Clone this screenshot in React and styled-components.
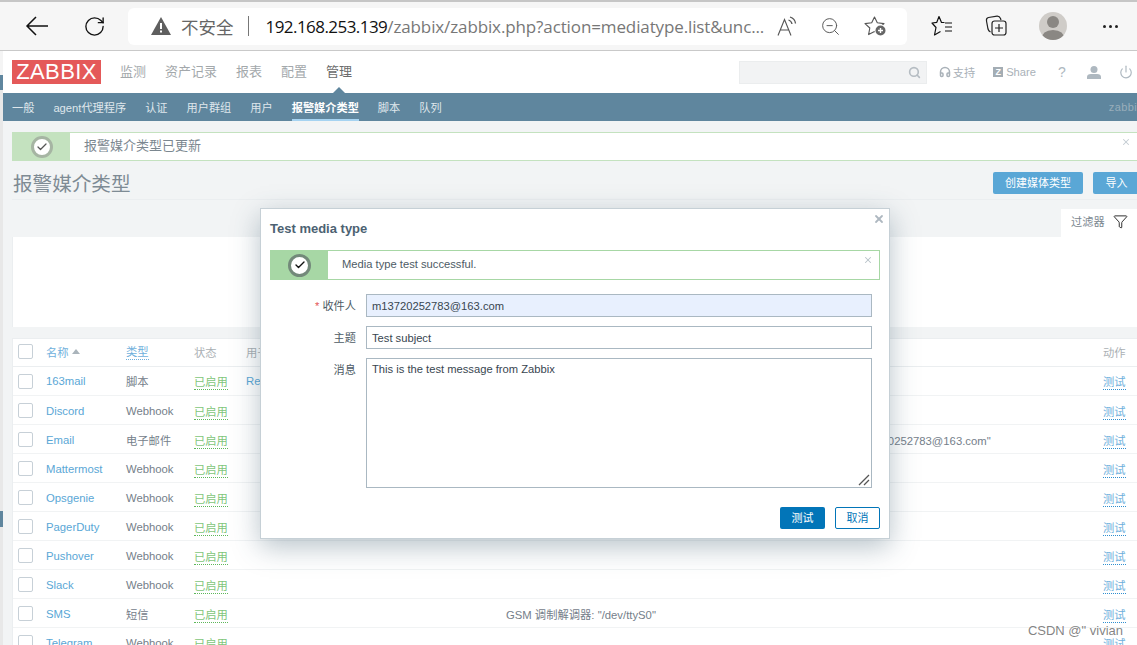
import React from 'react';
import styled, { createGlobalStyle } from 'styled-components';
import { RotateCw, ZoomOut, Search, Headphones, Power, Filter, Check, X } from 'lucide-react';

const rows = [
  { name: '163mail', type: '脚本', usedIn: 'Re' },
  { name: 'Discord', type: 'Webhook' },
  { name: 'Email', type: '电子邮件', detail: 'SMTP 服务器: "smtp.163.com.", SMTP HELO: "163.com", 电子邮件: "m13720252783@163.com"' },
  { name: 'Mattermost', type: 'Webhook' },
  { name: 'Opsgenie', type: 'Webhook' },
  { name: 'PagerDuty', type: 'Webhook' },
  { name: 'Pushover', type: 'Webhook' },
  { name: 'Slack', type: 'Webhook' },
  { name: 'SMS', type: '短信', detail: 'GSM 调制解调器: "/dev/ttyS0"' },
  { name: 'Telegram', type: 'Webhook' },
];

const menu = ['监测', '资产记录', '报表', '配置', '管理'];
const subMenu = ['一般', 'agent代理程序', '认证', '用户群组', '用户', '报警媒介类型', '脚本', '队列'];

export default function App() {
  return (
    <Page>
      <GlobalStyle />
      <BrowserBar>
        <NavIcon>
          <svg width="24" height="22" viewBox="0 0 24 22" fill="none" stroke="#111" strokeWidth="1.5">
            <path d="M2 11 H23 M11 2 L2 11 L11 20" />
          </svg>
        </NavIcon>
        <NavIcon><RotateCw size={23} strokeWidth={1.4} /></NavIcon>
        <AddressBar>
          <svg width="20" height="18" viewBox="0 0 20 18">
            <path d="M10 0 L20 18 H0 Z" fill="#5f5f5f" />
            <rect x="9" y="6" width="2" height="6" fill="#fff" />
            <rect x="9" y="13.5" width="2" height="2" fill="#fff" />
          </svg>
          <Insecure>不安全</Insecure>
          <AddressDivider />
          <Url><b>192.168.253.139</b>/zabbix/zabbix.php?action=mediatype.list&amp;unc...</Url>
          <AddressIcons>
            <svg width="20" height="21" viewBox="0 0 20 21" fill="none" stroke="#555" strokeWidth="1.1">
              <path d="M1 19.5 L7.5 3.5 L14 19.5 M3.4 14 H11.6" />
              <path d="M11.5 4 Q14.5 5 15 8 M13 1 Q18 2.5 18.5 7.5" strokeWidth="1.3" />
            </svg>
            <ZoomOut size={21} strokeWidth={1.1} color="#555" />
            <svg width="23" height="21" viewBox="0 0 23 21" fill="none">
              <path d="M10.5 1 L13.3 6.8 L20 7.6 L15.2 12 L16.4 18.6 L10.5 15.4 L4.6 18.6 L5.8 12 L1 7.6 L7.7 6.8 Z" stroke="#555" strokeWidth="1.1" strokeLinejoin="round" />
              <circle cx="16.5" cy="14.5" r="6" fill="#fff" />
              <circle cx="16.5" cy="14.5" r="5" fill="#666" />
              <path d="M14 14.5 H19 M16.5 12 V17" stroke="#fff" strokeWidth="1.4" />
            </svg>
          </AddressIcons>
        </AddressBar>
        <BrowserTools>
          <svg width="22" height="22" viewBox="0 0 22 22" fill="none" stroke="#111" strokeWidth="1.2" strokeLinejoin="round">
            <path d="M13.5 7.5 H10.5 L8 1.5 L5.8 7.3 L1 8 L5 12.5 L3.5 20 L9.5 16.5" />
            <path d="M14 8 H21 M14 12 H21 M14 16 H21" />
          </svg>
          <svg width="22" height="22" viewBox="0 0 22 22" fill="none" stroke="#222" strokeWidth="1.2">
            <path d="M5.5 17 Q3.5 16 3 14 L1.5 6 Q1 3 3.5 2.5 L12 1.2 Q14.5 1 15.5 3.5 L16 5" />
            <rect x="7" y="6" width="14" height="14" rx="2.5" />
            <path d="M14 9 V17 M10 13 H18" />
          </svg>
          <Avatar>
            <svg width="28" height="28" viewBox="0 0 28 28">
              <circle cx="14" cy="10" r="6" fill="#8a8783" />
              <path d="M2 28 Q3 18 14 18 Q25 18 26 28 Z" fill="#8a8783" />
            </svg>
          </Avatar>
          <Ellipsis><i /><i /><i /></Ellipsis>
        </BrowserTools>
      </BrowserBar>

      <Viewport>
        <Sliver />
        <Content>
          <Header>
            <Logo>ZABBIX</Logo>
            <MainMenu>
              {menu.map(item => (
                <MenuItem key={item} $active={item === '管理'}>{item}</MenuItem>
              ))}
            </MainMenu>
            <HeaderRight>
              <SearchBox><Search size={13} strokeWidth={3} color="#b5bcc2" /></SearchBox>
              <HeaderLink><Headphones size={12} strokeWidth={3} />支持</HeaderLink>
              <HeaderLink><ShareBadge>Z</ShareBadge>Share</HeaderLink>
              <HeaderIcon>?</HeaderIcon>
              <HeaderIcon>
                <svg width="14" height="13" viewBox="0 0 14 13" fill="#aeb8c0">
                  <circle cx="7" cy="3.5" r="3.5" />
                  <path d="M0 13 V11 Q0 8 4 8 H10 Q14 8 14 11 V13 Z" />
                </svg>
              </HeaderIcon>
              <HeaderIcon><Power size={14} strokeWidth={2} /></HeaderIcon>
            </HeaderRight>
          </Header>

          <SubNav>
            {subMenu.map(item => (
              <SubItem key={item} $active={item === '报警媒介类型'}>{item}</SubItem>
            ))}
            <ServerName>zabbix</ServerName>
          </SubNav>

          <Body>
            <PageMessage>
              <MessageBadge $width={57} $color="#c4e2bf">
                <CheckCircle $size={22} $ring="#a6b5a3"><Check size={12} strokeWidth={2.5} color="#555" /></CheckCircle>
              </MessageBadge>
              <MessageText>报警媒介类型已更新</MessageText>
              <CloseMark $top={4} $right={6}><X size={10} strokeWidth={2.5} color="#c4ccd2" /></CloseMark>
            </PageMessage>

            <TitleRow>
              <PageTitle>报警媒介类型</PageTitle>
              <TitleActions>
                <PrimaryButton $width={90}>创建媒体类型</PrimaryButton>
                <PrimaryButton $width={47}>导入</PrimaryButton>
              </TitleActions>
            </TitleRow>

            <FilterTabs>
              <FilterTab>过滤器<Filter size={15} strokeWidth={1.5} color="#222" /></FilterTab>
            </FilterTabs>
            <FilterPanel />

            <MediaTable>
              <HeadRow>
                <BoxCell><CheckBox /></BoxCell>
                <Cell><HeadLink>名称</HeadLink><SortArrow /></Cell>
                <Cell><HeadLink $underline>类型</HeadLink></Cell>
                <Cell>状态</Cell>
                <Cell>用于</Cell>
                <Cell />
                <Cell>动作</Cell>
              </HeadRow>
              {rows.map(row => (
                <Row key={row.name}>
                  <BoxCell><CheckBox /></BoxCell>
                  <Cell><NameLink>{row.name}</NameLink></Cell>
                  <Cell>{row.type}</Cell>
                  <Cell><StatusLink>已启用</StatusLink></Cell>
                  <Cell><NameLink>{row.usedIn}</NameLink></Cell>
                  <Cell>{row.detail}</Cell>
                  <Cell><TestLink>测试</TestLink></Cell>
                </Row>
              ))}
            </MediaTable>
          </Body>
        </Content>

        <Dialog>
          <CloseMark $top={4} $right={4}><X size={12} strokeWidth={3.6} color="#aeb8c0" /></CloseMark>
          <DialogTitle>Test media type</DialogTitle>
          <DialogMessage>
            <MessageBadge $width={57} $color="#a7d7a5">
              <CheckCircle $size={23} $ring="#73897a"><Check size={12} strokeWidth={2.8} color="#111" /></CheckCircle>
            </MessageBadge>
            <DialogMessageText>Media type test successful.</DialogMessageText>
            <CloseMark $top={4} $right={6}><X size={10} strokeWidth={2.5} color="#b8c2c9" /></CloseMark>
          </DialogMessage>
          <Form>
            <FieldLabel><Required>*</Required> 收件人</FieldLabel>
            <TextInput $filled>m13720252783@163.com</TextInput>
            <FieldLabel>主题</FieldLabel>
            <TextInput>Test subject</TextInput>
            <FieldLabel>消息</FieldLabel>
            <TextArea>
              This is the test message from Zabbix
              <ResizeGrip width="12" height="12" viewBox="0 0 12 12" stroke="#555" strokeWidth="1.3">
                <path d="M1 11 L11 1 M6 11 L11 6" />
              </ResizeGrip>
            </TextArea>
          </Form>
          <DialogFooter>
            <TestButton>测试</TestButton>
            <CancelButton>取消</CancelButton>
          </DialogFooter>
        </Dialog>

        <Watermark>CSDN @&quot; vivian</Watermark>
      </Viewport>
    </Page>
  );
}

const sans = `"Liberation Sans", Arial, "Noto Sans CJK SC", sans-serif`;

const GlobalStyle = createGlobalStyle`
  html, body {
    margin: 0;
    padding: 0;
    overflow: hidden;
    background: #f2f4f5;
    font-family: ${sans};
  }
`;

const Page = styled.div`
  width: 1137px;
  height: 645px;
  overflow: hidden;
  display: flex;
  flex-direction: column;
`;

const BrowserBar = styled.div`
  height: 51px;
  flex: none;
  box-sizing: border-box;
  display: flex;
  align-items: center;
  background: #f6f6f6;
  border-top: 2px solid #c6c6c6;
  border-bottom: 1px solid #c9c9c9;
  padding-left: 25px;
`;

const NavIcon = styled.div`
  width: 24px;
  height: 28px;
  margin-right: 33px;
  display: flex;
  align-items: center;
  justify-content: center;
  color: #111;
  &:nth-child(2) {
    margin-right: 22px;
  }
`;

const AddressBar = styled.div`
  width: 779px;
  height: 37px;
  box-sizing: border-box;
  background: #fff;
  border-radius: 6px;
  display: flex;
  align-items: center;
  padding-left: 23px;
  color: #6a6a6a;
`;

const Insecure = styled.span`
  margin-left: 10px;
  font: 17.5px "Noto Sans CJK SC", sans-serif;
  color: #666;
`;

const AddressDivider = styled.span`
  width: 1px;
  height: 20px;
  background: #777;
  margin: 0 17px 0 14px;
`;

const Url = styled.span`
  font: 17px "Open Sans", sans-serif;
  letter-spacing: -0.12px;
  color: #777;
  white-space: nowrap;
  b {
    font-weight: 400;
    color: #111;
    letter-spacing: -0.55px;
  }
`;

const AddressIcons = styled.div`
  margin-left: 13px;
  display: flex;
  align-items: center;
  gap: 23px;
`;

const BrowserTools = styled.div`
  display: flex;
  align-items: center;
  margin-left: 24px;
  gap: 32px;
`;

const Avatar = styled.div`
  width: 28px;
  height: 28px;
  border-radius: 50%;
  background: #cfccc8;
  overflow: hidden;
  svg {
    display: block;
  }
`;

const Ellipsis = styled.div`
  display: flex;
  gap: 3px;
  margin-left: 4px;
  i {
    width: 3px;
    height: 3px;
    border-radius: 50%;
    background: #222;
  }
`;

const Viewport = styled.div`
  position: relative;
  flex: 1;
  display: flex;
  min-height: 0;
`;

const Sliver = styled.div`
  width: 3px;
  flex: none;
  background: linear-gradient(#f4f4f4 0 24px, #5f869e 24px 39px, #e8e8e8 39px 460px, #5f869e 460px 476px, #e8e8e8 476px);
`;

const Content = styled.div`
  flex: 1;
  min-width: 0;
`;

const Header = styled.div`
  height: 42px;
  background: #fff;
  display: flex;
  align-items: center;
  padding-left: 9px;
`;

const Logo = styled.div`
  width: 89px;
  height: 24px;
  background: #e45959;
  color: #fff;
  font-size: 22px;
  letter-spacing: 0.4px;
  line-height: 24px;
  text-align: center;
`;

const MainMenu = styled.div`
  display: flex;
  height: 100%;
  align-items: center;
  gap: 19px;
  margin-left: 19px;
  padding-bottom: 3px;
  box-sizing: border-box;
`;

const MenuItem = styled.span`
  position: relative;
  font-size: 13px;
  color: ${p => (p.$active ? '#6b6b6b' : '#a3a8ab')};
  ${p =>
    p.$active &&
    `&::after {
      content: '';
      position: absolute;
      left: 50%;
      bottom: -14px;
      margin-left: -7px;
      border: 7px solid transparent;
      border-top: 0;
      border-bottom-color: #5f869e;
    }`}
`;

const HeaderRight = styled.div`
  margin-left: auto;
  margin-right: -5px;
  display: flex;
  align-items: center;
  color: #a4adb4;
`;

const SearchBox = styled.div`
  width: 188px;
  height: 23px;
  box-sizing: border-box;
  background: #f2f3f4;
  border: 1px solid #ebedee;
  display: flex;
  align-items: center;
  justify-content: flex-end;
  padding-right: 5px;
`;

const HeaderLink = styled.span`
  display: flex;
  align-items: center;
  gap: 2px;
  font-size: 11.2px;
  margin-left: 12px;
  color: #a9b1b8;
  &:nth-child(3) {
    margin: 0 10px 0 18px;
    gap: 3px;
  }
`;

const ShareBadge = styled.span`
  width: 10px;
  height: 10px;
  background: #a4adb4;
  color: #fff;
  font-size: 9px;
  font-weight: 700;
  line-height: 10px;
  text-align: center;
`;

const HeaderIcon = styled.span`
  width: 32px;
  display: flex;
  justify-content: center;
  font-size: 14px;
  color: #aeb8c0;
`;

const SubNav = styled.div`
  height: 28px;
  background: #5f869e;
  display: flex;
  align-items: stretch;
  padding-left: 9px;
  gap: 19px;
  font-size: 11.2px;
  color: #dfe7ec;
`;

const SubItem = styled.span`
  display: flex;
  align-items: center;
  box-sizing: border-box;
  padding-top: 1px;
  font-weight: ${p => (p.$active ? 700 : 400)};
  color: ${p => (p.$active ? '#fff' : '#dfe7ec')};
  border-bottom: 2px solid ${p => (p.$active ? '#a6d3f1' : 'transparent')};
`;

const ServerName = styled.span`
  margin-left: auto;
  margin-right: -6px;
  align-self: center;
  color: #99aebb;
  font-size: 11px;
  letter-spacing: 0.4px;
`;

const Body = styled.div`
  padding: 11px 0 0 9px;
  background: #f2f4f5;
`;

const PageMessage = styled.div`
  position: relative;
  height: 29px;
  box-sizing: border-box;
  display: flex;
  align-items: stretch;
  background: #fff;
  border: 1px solid #c4e2bf;
  border-right: 0;
`;

const MessageBadge = styled.div`
  width: ${p => p.$width}px;
  flex: none;
  display: flex;
  align-items: center;
  justify-content: center;
  background: ${p => p.$color};
`;

const CheckCircle = styled.div`
  width: ${p => p.$size}px;
  height: ${p => p.$size}px;
  box-sizing: border-box;
  border: 3px solid ${p => p.$ring};
  border-radius: 50%;
  background: #fff;
  display: flex;
  align-items: center;
  justify-content: center;
`;

const MessageText = styled.div`
  padding-left: 14px;
  font-size: 13px;
  line-height: 25px;
  color: #7b8790;
`;

const CloseMark = styled.div`
  position: absolute;
  top: ${p => p.$top}px;
  right: ${p => p.$right}px;
  display: flex;
`;

const TitleRow = styled.div`
  height: 39px;
  display: flex;
  align-items: center;
  justify-content: space-between;
  box-sizing: border-box;
  padding-top: 5px;
  border-bottom: 1px solid #ebeef0;
`;

const PageTitle = styled.h1`
  margin: 0 0 0 1px;
  font-size: 19.6px;
  font-weight: 400;
  color: #7e8b94;
`;

const TitleActions = styled.div`
  display: flex;
  gap: 10px;
  margin-right: -3px;
`;

const PrimaryButton = styled.div`
  width: ${p => p.$width}px;
  height: 22px;
  border-radius: 2px;
  background: #5aa7d6;
  color: #fff;
  font-size: 11px;
  line-height: 22px;
  text-align: center;
`;

const FilterTabs = styled.div`
  height: 37px;
  display: flex;
  justify-content: flex-end;
  align-items: flex-end;
`;

const FilterTab = styled.div`
  width: 76px;
  height: 28px;
  box-sizing: border-box;
  padding: 0 0 4px 10px;
  display: flex;
  align-items: center;
  gap: 8px;
  background: #fff;
  font-size: 11.2px;
  color: #7b8790;
`;

const FilterPanel = styled.div`
  height: 90px;
  background: #fff;
  border-left: 1px solid #ebeef0;
`;

const MediaTable = styled.div`
  margin-top: 11px;
  background: #fff;
  border-left: 1px solid #ebeef0;
  border-top: 1px solid #ebeef0;
`;

const Cell = styled.div`
  display: flex;
  align-items: center;
  white-space: nowrap;
  padding-top: 2px;
`;

const BoxCell = styled.div`
  display: flex;
  align-items: center;
`;

const Row = styled.div`
  height: 29px;
  box-sizing: border-box;
  display: grid;
  grid-template-columns: 33px 80px 68px 52px 260px 597px 1fr;
  align-items: center;
  border-bottom: 1px solid #f1f3f4;
  font-size: 11.3px;
  color: #75808a;
  &:nth-child(2) ${Cell} {
    padding-top: 0;
  }
`;

const HeadRow = styled(Row)`
  height: 28px;
  padding-bottom: 2px;
  color: #aab0b4;
  border-bottom-color: #ebeef0;
  ${Cell} {
    padding-top: 0;
  }
`;

const CheckBox = styled.span`
  width: 13px;
  height: 13px;
  margin-left: 5px;
  border: 1px solid #c7d0d7;
  border-radius: 2px;
`;

const HeadLink = styled.span`
  color: #6fb0dc;
  border-bottom: ${p => (p.$underline ? '1px dotted #6fb0dc' : '0')};
`;

const SortArrow = styled.span`
  width: 0;
  height: 0;
  margin-left: 3px;
  border: 4px solid transparent;
  border-top: 0;
  border-bottom: 5px solid #aab4bb;
`;

const NameLink = styled.span`
  color: #5aa7d6;
`;

const StatusLink = styled.span`
  color: #7ec67a;
  border-bottom: 1px dotted #5eb75a;
`;

const TestLink = styled.span`
  color: #6fb0dc;
  border-bottom: 1px dotted #2f8fd0;
`;

const Dialog = styled.div`
  position: absolute;
  left: 260px;
  top: 157px;
  width: 630px;
  height: 331px;
  box-sizing: border-box;
  background: #fff;
  border: 1px solid #c6d0d6;
  box-shadow: 0 8px 26px rgba(52, 84, 104, 0.35);
  padding: 0 9px;
`;

const DialogTitle = styled.div`
  font-size: 13px;
  font-weight: 700;
  color: #4c6272;
  margin: 12px 0 13px;
  line-height: 16px;
`;

const DialogMessage = styled.div`
  position: relative;
  height: 30px;
  box-sizing: border-box;
  display: flex;
  align-items: stretch;
  border: 1px solid #a7d7a5;
`;

const DialogMessageText = styled.div`
  padding-left: 14px;
  font-size: 11.2px;
  line-height: 27px;
  color: #4d5b65;
`;

const Form = styled.div`
  display: grid;
  grid-template-columns: 96px 506px;
  row-gap: 9px;
  margin-top: 14px;
`;

const FieldLabel = styled.div`
  text-align: right;
  padding: 1px 10px 0 0;
  font-size: 11.2px;
  line-height: 22px;
  color: #4d5b65;
`;

const Required = styled.span`
  color: #e45959;
`;

const TextInput = styled.div`
  height: 23px;
  box-sizing: border-box;
  border: 1px solid #aab8c2;
  background: ${p => (p.$filled ? '#e8f0fe' : '#fff')};
  padding-left: 5px;
  font-size: 11.2px;
  line-height: 22px;
  color: #384650;
`;

const TextArea = styled.div`
  position: relative;
  height: 130px;
  box-sizing: border-box;
  border: 1px solid #aab8c2;
  padding: 3px 5px;
  font-size: 11.2px;
  line-height: 15px;
  color: #384650;
`;

const ResizeGrip = styled.svg`
  position: absolute;
  right: 1px;
  bottom: 1px;
`;

const DialogFooter = styled.div`
  display: flex;
  justify-content: flex-end;
  gap: 10px;
  margin-top: 19px;
`;

const TestButton = styled.div`
  width: 45px;
  height: 22px;
  border-radius: 2px;
  background: #0275b8;
  color: #fff;
  font-size: 11px;
  line-height: 22px;
  text-align: center;
`;

const CancelButton = styled.div`
  width: 45px;
  height: 22px;
  box-sizing: border-box;
  border: 1px solid #0275b8;
  border-radius: 2px;
  color: #0275b8;
  font-size: 11px;
  line-height: 20px;
  text-align: center;
`;

const Watermark = styled.div`
  position: absolute;
  right: 14px;
  bottom: 7px;
  font-size: 13px;
  color: rgba(90, 90, 90, 0.75);
`;
